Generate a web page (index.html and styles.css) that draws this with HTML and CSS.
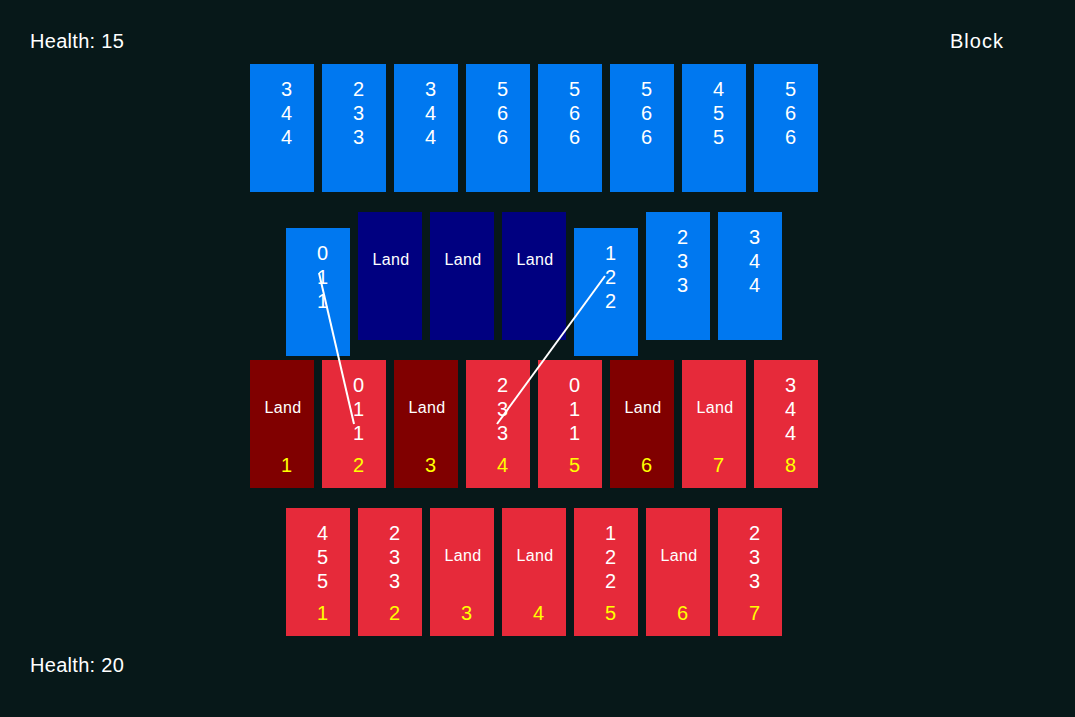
FILE: index.html
```html
<!DOCTYPE html>
<html>
<head>
<meta charset="utf-8">
<link rel="stylesheet" href="styles.css">
</head>
<body>
<div class="game">
  <div class="top">
    <div class="label">Health: 15</div>
    <div class="label wide">Block</div>
  </div>
  <div class="board">
    <div class="row">
      <div class="card blue"><div class="stats">3<br>4<br>4</div></div>
      <div class="card blue"><div class="stats">2<br>3<br>3</div></div>
      <div class="card blue"><div class="stats">3<br>4<br>4</div></div>
      <div class="card blue"><div class="stats">5<br>6<br>6</div></div>
      <div class="card blue"><div class="stats">5<br>6<br>6</div></div>
      <div class="card blue"><div class="stats">5<br>6<br>6</div></div>
      <div class="card blue"><div class="stats">4<br>5<br>5</div></div>
      <div class="card blue"><div class="stats">5<br>6<br>6</div></div>
    </div>
    <div class="row">
      <div class="card blue shifted"><div class="stats">0<br>1<br>1</div></div>
      <div class="card navy"><div class="land">Land</div></div>
      <div class="card navy"><div class="land">Land</div></div>
      <div class="card navy"><div class="land">Land</div></div>
      <div class="card blue shifted"><div class="stats">1<br>2<br>2</div></div>
      <div class="card blue"><div class="stats">2<br>3<br>3</div></div>
      <div class="card blue"><div class="stats">3<br>4<br>4</div></div>
    </div>
    <div class="row">
      <div class="card maroon"><div class="land">Land</div><div class="num">1</div></div>
      <div class="card red"><div class="stats">0<br>1<br>1</div><div class="num">2</div></div>
      <div class="card maroon"><div class="land">Land</div><div class="num">3</div></div>
      <div class="card red"><div class="stats">2<br>3<br>3</div><div class="num">4</div></div>
      <div class="card red"><div class="stats">0<br>1<br>1</div><div class="num">5</div></div>
      <div class="card maroon"><div class="land">Land</div><div class="num">6</div></div>
      <div class="card red"><div class="land">Land</div><div class="num">7</div></div>
      <div class="card red"><div class="stats">3<br>4<br>4</div><div class="num">8</div></div>
    </div>
    <div class="row">
      <div class="card red"><div class="stats">4<br>5<br>5</div><div class="num">1</div></div>
      <div class="card red"><div class="stats">2<br>3<br>3</div><div class="num">2</div></div>
      <div class="card red"><div class="land">Land</div><div class="num">3</div></div>
      <div class="card red"><div class="land">Land</div><div class="num">4</div></div>
      <div class="card red"><div class="stats">1<br>2<br>2</div><div class="num">5</div></div>
      <div class="card red"><div class="land">Land</div><div class="num">6</div></div>
      <div class="card red"><div class="stats">2<br>3<br>3</div><div class="num">7</div></div>
    </div>
  </div>
  <div class="bottom">
    <div class="label">Health: 20</div>
  </div>
  <svg class="lines" width="1075" height="717" viewBox="0 0 1075 717">
    <line x1="319" y1="273" x2="354" y2="424" />
    <line x1="605" y1="276" x2="497" y2="424" />
  </svg>
</div>
</body>
</html>
```

FILE: styles.css
```css
html, body {
  margin: 0;
  padding: 0;
  background: #071819;
}

.game {
  position: relative;
  width: 1075px;
  height: 717px;
  overflow: hidden;
  font-family: "Liberation Sans", Arial, sans-serif;
  color: #ffffff;
}

.top {
  box-sizing: border-box;
  height: 64px;
  padding: 31px 0 0 30px;
  display: grid;
  grid-template-columns: 920px auto;
}

.label {
  font-size: 20px;
  line-height: 20px;
  letter-spacing: 0.3px;
}

.label.wide {
  letter-spacing: 1px;
}

.board {
  width: 568px;
  margin-left: 250px;
  display: flex;
  flex-direction: column;
  gap: 20px;
}

.row {
  height: 128px;
  display: flex;
  justify-content: center;
  align-items: flex-start;
  gap: 8px;
}

.card {
  box-sizing: border-box;
  width: 64px;
  height: 128px;
  flex: none;
  display: flex;
  flex-direction: column;
}

.card.shifted {
  margin-top: 16px;
}

.blue { background: #0078f0; }
.navy { background: #000080; }
.red { background: #e62a3a; }
.maroon { background: #800000; }

.stats {
  padding: 13px 0 0 31px;
  font-size: 20px;
  line-height: 24px;
}

.land {
  margin-top: 40px;
  padding-left: 2px;
  text-align: center;
  font-size: 16px;
  line-height: 16px;
  letter-spacing: 0.4px;
}

.num {
  margin-top: auto;
  padding: 0 0 13px 31px;
  color: #ffff00;
  font-size: 20px;
  line-height: 20px;
}

.bottom {
  padding: 19px 0 0 30px;
}

.lines {
  position: absolute;
  left: 0;
  top: 0;
  pointer-events: none;
}

.lines line {
  stroke: #ffffff;
  stroke-width: 2;
}
```
